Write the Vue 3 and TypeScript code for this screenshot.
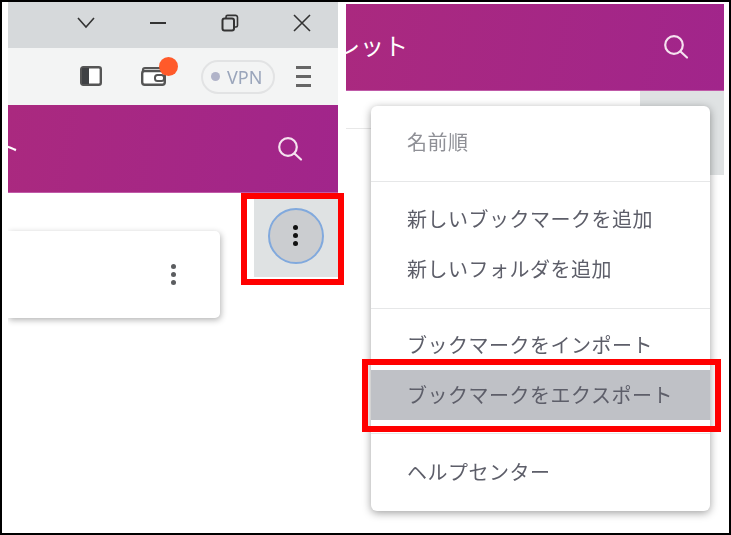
<template>
  <div class="frame">
    <section class="panel left">
      <div class="titlebar">
        <svg class="win-icon" viewBox="0 0 18 18"><path d="M1 4l8 9 8-9" /></svg>
        <svg class="win-icon" viewBox="0 0 18 18"><path d="M1 9h16" stroke-width="2" /></svg>
        <svg class="win-icon" viewBox="0 0 18 18">
          <rect x="1.5" y="4.5" width="11.5" height="12" rx="2" stroke-width="2" />
          <path d="M5 4V3a1.6 1.6 0 0 1 1.6-1.6h7.8A2 2 0 0 1 16.5 3.400v8a1.600 1.600 0 0 1-1.600 1.600H13" stroke-width="1.600" />
        </svg>
        <svg class="win-icon" viewBox="0 0 18 18"><path d="M1 1l16 16M17 1L1 17" /></svg>
      </div>

      <div class="toolbar">
        <svg class="tool-sidebar" viewBox="0 0 22 20">
          <rect x="1.200" y="1.200" width="19.600" height="17.600" rx="2" fill="#fff" stroke="#555" stroke-width="2.400" />
          <rect x="2" y="2" width="7" height="16" fill="#3f4144" />
        </svg>
        <div class="wallet">
          <svg class="tool-wallet" viewBox="0 0 25 20">
            <path d="M2 6V4a2 2 0 0 1 2-2h15" fill="none" stroke="#555" stroke-width="2.200" />
            <rect x="1.200" y="5" width="22.600" height="13.800" rx="2.500" fill="#fff" stroke="#555" stroke-width="2.400" />
            <rect x="14" y="9" width="9" height="6" rx="2.500" fill="#fff" stroke="#555" stroke-width="2" />
          </svg>
          <span class="badge"></span>
        </div>
        <div class="vpn"><span class="vpn-dot"></span>VPN</div>
        <div class="burger"><span></span><span></span><span></span></div>
      </div>

      <header class="appbar title-left">
        <span class="app-title">ウォレット</span>
        <svg class="search" viewBox="0 0 26 26">
          <circle cx="11" cy="11" r="8.800" />
          <path d="M17.500 17.500l6.500 6" />
        </svg>
      </header>

      <div class="content">
        <div class="card">
          <div class="dots card-dots"><i></i><i></i><i></i></div>
        </div>
        <div class="action">
          <button class="round-btn">
            <span class="dots btn-dots"><i></i><i></i><i></i></span>
          </button>
        </div>
      </div>
    </section>

    <section class="panel right">
      <header class="appbar title-right">
        <span class="app-title">ウォレット</span>
        <svg class="search" viewBox="0 0 26 26">
          <circle cx="11" cy="11" r="8.800" />
          <path d="M17.500 17.500l6.500 6" />
        </svg>
      </header>
      <div class="under">
        <div class="under-line"></div>
        <div class="under-btn"></div>
      </div>

      <ul class="menu">
        <li v-for="(group, g) in menuGroups" :key="g" class="menu-group">
          <div
            v-for="item in group"
            :key="item.label"
            class="menu-item"
            :class="{ muted: item.muted, active: item.active }"
          >
            <span class="menu-label">{{ item.label }}</span>
          </div>
        </li>
      </ul>
    </section>

    <div class="callout callout-btn"></div>
    <div class="callout callout-item"></div>
  </div>
</template>

<script setup lang="ts">
interface MenuItem {
  label: string;
  muted?: boolean;
  active?: boolean;
}

const menuGroups: MenuItem[][] = [
  [{ label: '名前順', muted: true }],
  [{ label: '新しいブックマークを追加' }, { label: '新しいフォルダを追加' }],
  [{ label: 'ブックマークをインポート' }, { label: 'ブックマークをエクスポート', active: true }],
  [{ label: 'ヘルプセンター' }]
];
</script>

<style>
html,
body {
  margin: 0;
  background: #fff;
}
</style>

<style scoped>
.frame {
  position: relative;
  box-sizing: border-box;
  width: 731px;
  height: 535px;
  border: 2px solid #000;
  padding: 0 5px 0 6px;
  display: flex;
  gap: 8px;
  overflow: hidden;
  background: #fff;
  font-family: "Noto Sans CJK JP", "Noto Sans", sans-serif;
}

.panel {
  position: relative;
  overflow: hidden;
  display: flex;
  flex-direction: column;
  filter: blur(0.35px);
}

.left {
  width: 330px;
}

.right {
  width: 378px;
  padding-top: 2px;
}

.titlebar {
  height: 46px;
  box-sizing: border-box;
  background: #d6d9db;
  display: flex;
  align-items: center;
  justify-content: flex-end;
  gap: 54px;
  padding: 0 27px 4px 0;
}

.win-icon {
  width: 18px;
  height: 18px;
  fill: none;
  stroke: #333;
  stroke-width: 1.600;
}

.toolbar {
  height: 57px;
  background: #f3f4f4;
  display: flex;
  align-items: center;
  padding-left: 72px;
  box-sizing: border-box;
}

.tool-sidebar {
  width: 22px;
  height: 20px;
  margin-top: -1px;
}

.wallet {
  position: relative;
  width: 25px;
  height: 20px;
  margin-left: 39px;
  margin-top: -1px;
}

.tool-wallet {
  display: block;
  width: 25px;
  height: 20px;
}

.badge {
  position: absolute;
  left: 18px;
  top: -9px;
  width: 19px;
  height: 19px;
  border-radius: 50%;
  background: #ff5a2a;
}

.vpn {
  width: 74px;
  height: 34px;
  box-sizing: border-box;
  margin-left: 35px;
  border: 2px solid #e2e3e4;
  border-radius: 17px;
  display: flex;
  align-items: center;
  gap: 7px;
  padding-left: 8px;
  color: #9aa5bb;
  font-size: 18px;
  font-family: "Noto Sans", sans-serif;
}

.vpn-dot {
  width: 9px;
  height: 9px;
  border-radius: 50%;
  background: #b1b4c9;
}

.burger {
  margin-left: 21px;
  width: 15px;
  display: flex;
  flex-direction: column;
  gap: 6px;
}

.burger span {
  height: 3px;
  background: #666;
}

.appbar {
  height: 87px;
  flex-shrink: 0;
  display: flex;
  align-items: center;
  justify-content: space-between;
  overflow: hidden;
  background: linear-gradient(100deg, #aa297f, #a1258b);
  border-bottom: 1px solid #c05aa8;
  box-sizing: border-box;
}

.title-left {
  height: 88px;
}

.app-title {
  flex-shrink: 0;
  width: 120px;
  color: #fff;
  font-size: 24px;
  line-height: 30px;
  padding-bottom: 4px;
}

.title-left .app-title {
  margin-left: -108px;
}

.title-right .app-title {
  margin-left: -58px;
}

.search {
  width: 26px;
  height: 26px;
  fill: none;
  stroke: #f5e2ef;
  stroke-width: 2.200;
  stroke-linecap: round;
}

.title-left .search {
  margin-right: 35px;
}

.title-right .search {
  margin-right: 35px;
}

.content {
  display: flex;
  align-items: flex-start;
}

.card {
  width: 212px;
  height: 87px;
  margin-top: 38px;
  background: #fff;
  border-radius: 0 5px 5px 0;
  box-shadow: 1px 2px 6px rgba(0, 0, 0, 0.3);
  display: flex;
  align-items: center;
  justify-content: flex-end;
  padding-right: 44px;
  box-sizing: border-box;
}

.dots {
  display: flex;
  flex-direction: column;
  gap: 2.500px;
}

.dots i {
  display: block;
  width: 5.500px;
  height: 5.500px;
  border-radius: 50%;
  background: #5b5d60;
}

.action {
  width: 84px;
  height: 78px;
  margin-top: 6px;
  margin-left: 34px;
  background: #dfe2e3;
  display: flex;
  align-items: center;
  justify-content: center;
  padding: 0 1px 5px 0;
  box-sizing: border-box;
}

.round-btn {
  width: 56px;
  height: 56px;
  padding: 0;
  border: 2.500px solid #81a9dd;
  border-radius: 50%;
  background: #cbcdd0;
  display: flex;
  align-items: center;
  justify-content: center;
}

.btn-dots i {
  background: #111;
}

.under {
  display: flex;
  align-items: flex-start;
}

.under-line {
  flex: 1;
  height: 37px;
  border-bottom: 1px solid #e8e8e8;
}

.under-btn {
  width: 84px;
  height: 84px;
  background: #dfe2e3;
}

.menu {
  position: absolute;
  left: 25px;
  top: 104px;
  width: 339px;
  height: 405px;
  margin: 0;
  padding: 0;
  list-style: none;
  background: #fff;
  border-radius: 6px;
  box-shadow: 0 2px 8px rgba(0, 0, 0, 0.38);
}

.menu-group {
  padding: 12px 0 14px;
  border-bottom: 1px solid #e6e7e8;
}

.menu-group:first-child {
  padding-top: 11px;
}

.menu-group:nth-child(3) {
  padding: 11px 0 13px;
}

.menu-group:last-child {
  padding-top: 13px;
  border-bottom: none;
}

.menu-item {
  height: 50px;
  display: flex;
  align-items: center;
  padding-left: 36px;
  font-size: 20px;
  letter-spacing: 0.500px;
  color: #5d5e69;
  white-space: nowrap;
}

.menu-label {
  padding-bottom: 2px;
}

.menu-item.muted {
  color: #8f9096;
}

.menu-item.active {
  background: #bfc1c6;
}

.callout {
  position: absolute;
  box-sizing: border-box;
  border: 6px solid #f00;
  pointer-events: none;
}

.callout-btn {
  left: 239px;
  top: 191px;
  width: 103px;
  height: 92px;
}

.callout-item {
  left: 360px;
  top: 357px;
  width: 359px;
  height: 73px;
}
</style>
